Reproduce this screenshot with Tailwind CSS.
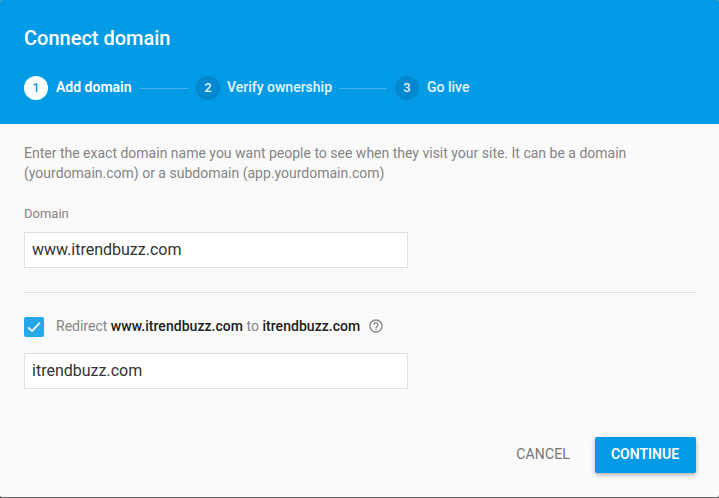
<!DOCTYPE html>
<html lang="en">
  <head>
    <meta charset="UTF-8" />
    <title>Connect domain</title>
    <script src="https://cdn.jsdelivr.net/npm/@tailwindcss/browser@4"></script>
  </head>
  <body class="bg-[#666] h-screen overflow-hidden font-['Roboto',sans-serif]">
    <div class="bg-[#fafafa] h-[497px] rounded-[2px] overflow-hidden flex flex-col">
      <header class="bg-[#039be5] text-white h-31 shrink-0 px-6 pt-6">
        <h2 class="text-xl leading-7 font-medium">Connect domain</h2>

        <ol class="mt-6 flex items-center text-sm font-medium">
          <li class="flex items-center gap-2">
            <span class="size-6 rounded-full bg-white text-[#039be5] text-[13px] flex items-center justify-center">1</span>
            <span class="w-[76px] leading-6 -mt-0.5 font-semibold whitespace-nowrap">Add domain</span>
          </li>
          <li class="w-12 h-px mx-2 mt-px bg-white/25"></li>
          <li class="flex items-center gap-2">
            <span class="size-6 rounded-full bg-[#0288d1] text-white/90 text-[13px] flex items-center justify-center">2</span>
            <span class="w-[104px] -ml-px leading-6 -mt-0.5 text-white/90 whitespace-nowrap">Verify ownership</span>
          </li>
          <li class="w-12 h-px mx-2 mt-px bg-white/25"></li>
          <li class="flex items-center gap-2">
            <span class="size-6 rounded-full bg-[#0288d1] text-white/90 text-[13px] flex items-center justify-center">3</span>
            <span class="leading-6 -mt-0.5 text-white/90">Go live</span>
          </li>
        </ol>
      </header>

      <form class="pl-6 pr-[23px] pt-[19px] flex flex-col">
        <p class="text-sm leading-5 text-[#858585]">
          Enter the exact domain name you want people to see when they visit your site. It can be a domain<br />
          (yourdomain.com) or a subdomain (app.yourdomain.com)
        </p>

        <label for="domain" class="mt-[21px] text-[13px] leading-5 text-[#858585]">Domain</label>
        <input
          id="domain"
          type="text"
          value="www.itrendbuzz.com"
          class="mt-2 w-96 h-9 px-[7px] pb-0.5 border border-[#e0e0e0] bg-white text-base text-[#333]"
        />

        <hr class="mt-6 border-[#e0e0e0]" />

        <div class="mt-6 h-5 flex items-center text-sm text-[#858585]">
          <span class="size-5 rounded-[2px] bg-[#27a6e8] flex items-center justify-center">
            <svg class="size-4" viewBox="0 0 16 16" fill="none" stroke="#fff" stroke-width="1.7">
              <path d="M2.2 8.3 6 12 14 3.6" />
            </svg>
          </span>
          <span class="ml-3 -mt-0.5">
            Redirect <b class="font-medium tracking-[0.003em] text-[#212121]">www.itrendbuzz.com</b> to
            <b class="font-medium tracking-[0.003em] text-[#212121]">itrendbuzz.com</b>
          </span>
          <svg class="ml-2 size-4 -mt-0.5" viewBox="0 0 24 24" fill="#858585">
            <path d="M11 18h2v-2h-2v2zm1-16C6.48 2 2 6.48 2 12s4.48 10 10 10 10-4.48 10-10S17.52 2 12 2zm0 18c-4.41 0-8-3.59-8-8s3.59-8 8-8 8 3.59 8 8-3.59 8-8 8zm0-14c-2.21 0-4 1.79-4 4h2c0-1.1.9-2 2-2s2 .9 2 2c0 2-3 1.75-3 5h2c0-2.25 3-2.5 3-5 0-2.21-1.79-4-4-4z" />
          </svg>
        </div>

        <input
          id="redirect"
          type="text"
          value="itrendbuzz.com"
          class="mt-4 w-96 h-9 px-[7px] pb-0.5 border border-[#e0e0e0] bg-white text-base text-[#333]"
        />

        <div class="mt-12 flex justify-end gap-2 text-sm font-medium">
          <button type="button" class="h-9 px-4 pr-[17px] pb-0.5 text-[#757575] font-normal tracking-[0.01em]">CANCEL</button>
          <button
            type="submit"
            class="w-[101px] h-9 pb-0.5 pr-px rounded-[2px] bg-[#039be5] text-white font-semibold shadow-[0_2px_4px_rgba(0,0,0,0.3)]"
          >
            CONTINUE
          </button>
        </div>
      </form>
    </div>
  </body>
</html>
